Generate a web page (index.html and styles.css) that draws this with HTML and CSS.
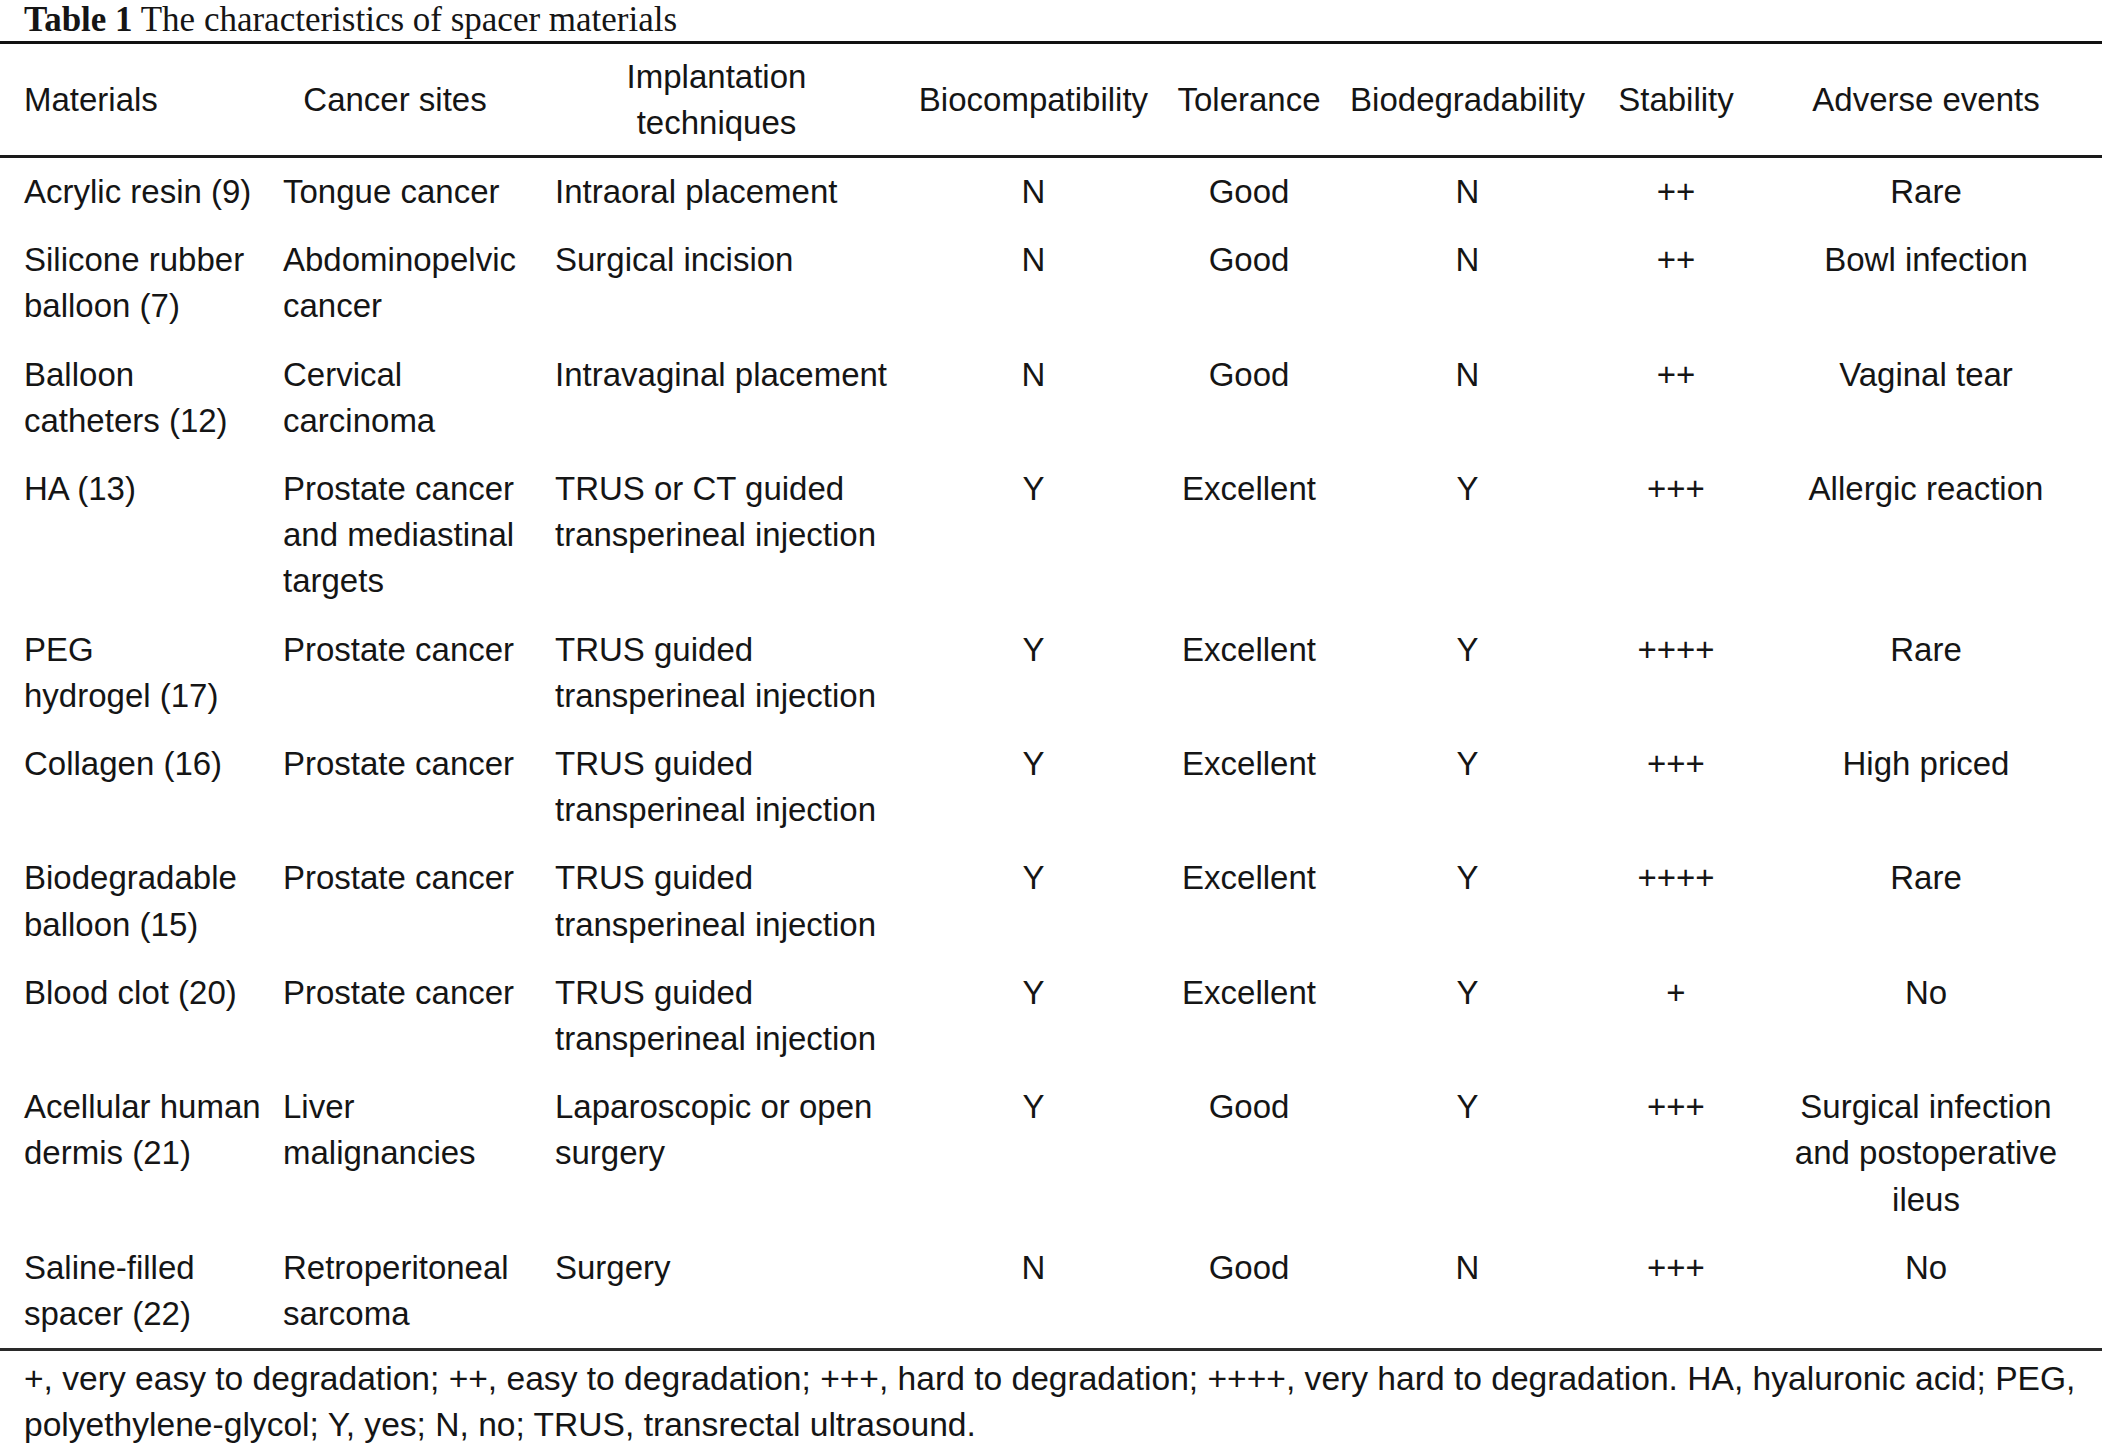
FILE: index.html
```html
<!DOCTYPE html>
<html lang="en">
<head>
<meta charset="utf-8">
<title>Table 1 The characteristics of spacer materials</title>
<link rel="stylesheet" href="styles.css">
</head>
<body>
<div class="page">
  <div class="caption"><span class="caption-label">Table 1</span> The characteristics of spacer materials</div>
  <table class="data">
    <colgroup>
      <col class="c1"><col class="c2"><col class="c3"><col class="c4"><col class="c5"><col class="c6"><col class="c7"><col class="c8">
    </colgroup>
    <thead>
      <tr>
        <th class="h-left">Materials</th>
        <th class="h-sites">Cancer sites</th>
        <th class="h-tech">Implantation<br>techniques</th>
        <th>Biocompatibility</th>
        <th>Tolerance</th>
        <th>Biodegradability</th>
        <th>Stability</th>
        <th>Adverse events</th>
      </tr>
    </thead>
    <tbody>
      <tr>
        <td class="first">Acrylic resin (9)</td><td class="left">Tongue cancer</td><td class="left">Intraoral placement</td>
        <td>N</td><td>Good</td><td>N</td><td>++</td><td>Rare</td>
      </tr>
      <tr>
        <td class="first">Silicone rubber<br>balloon (7)</td><td class="left">Abdominopelvic<br>cancer</td><td class="left">Surgical incision</td>
        <td>N</td><td>Good</td><td>N</td><td>++</td><td>Bowl infection</td>
      </tr>
      <tr>
        <td class="first">Balloon<br>catheters (12)</td><td class="left">Cervical<br>carcinoma</td><td class="left">Intravaginal placement</td>
        <td>N</td><td>Good</td><td>N</td><td>++</td><td>Vaginal tear</td>
      </tr>
      <tr>
        <td class="first">HA (13)</td><td class="left">Prostate cancer<br>and mediastinal<br>targets</td><td class="left">TRUS or CT guided<br>transperineal injection</td>
        <td>Y</td><td>Excellent</td><td>Y</td><td>+++</td><td>Allergic reaction</td>
      </tr>
      <tr>
        <td class="first">PEG<br>hydrogel (17)</td><td class="left">Prostate cancer</td><td class="left">TRUS guided<br>transperineal injection</td>
        <td>Y</td><td>Excellent</td><td>Y</td><td>++++</td><td>Rare</td>
      </tr>
      <tr>
        <td class="first">Collagen (16)</td><td class="left">Prostate cancer</td><td class="left">TRUS guided<br>transperineal injection</td>
        <td>Y</td><td>Excellent</td><td>Y</td><td>+++</td><td>High priced</td>
      </tr>
      <tr>
        <td class="first">Biodegradable<br>balloon (15)</td><td class="left">Prostate cancer</td><td class="left">TRUS guided<br>transperineal injection</td>
        <td>Y</td><td>Excellent</td><td>Y</td><td>++++</td><td>Rare</td>
      </tr>
      <tr>
        <td class="first">Blood clot (20)</td><td class="left">Prostate cancer</td><td class="left">TRUS guided<br>transperineal injection</td>
        <td>Y</td><td>Excellent</td><td>Y</td><td>+</td><td>No</td>
      </tr>
      <tr>
        <td class="first">Acellular human<br>dermis (21)</td><td class="left">Liver<br>malignancies</td><td class="left">Laparoscopic or open<br>surgery</td>
        <td>Y</td><td>Good</td><td>Y</td><td>+++</td><td>Surgical infection<br>and postoperative<br>ileus</td>
      </tr>
      <tr>
        <td class="first">Saline-filled<br>spacer (22)</td><td class="left">Retroperitoneal<br>sarcoma</td><td class="left">Surgery</td>
        <td>N</td><td>Good</td><td>N</td><td>+++</td><td>No</td>
      </tr>
    </tbody>
  </table>
  <div class="notes">+, very easy to degradation; ++, easy to degradation; +++, hard to degradation; ++++, very hard to degradation. HA, hyaluronic acid; PEG,<br>polyethylene-glycol; Y, yes; N, no; TRUS, transrectal ultrasound.</div>
</div>
</body>
</html>
```
FILE: styles.css
```css
html, body {
  margin: 0;
  padding: 0;
  background: #ffffff;
}

.page {
  width: 2102px;
  color: #151515;
  font-family: "Liberation Sans", Arial, Helvetica, sans-serif;
  font-size: 33px;
}

.caption {
  font-family: "Liberation Serif", "Times New Roman", serif;
  font-size: 35px;
  line-height: 39px;
  padding: 0 0 2px 24px;
  white-space: nowrap;
}

.caption-label {
  font-weight: bold;
}

.data {
  width: 2102px;
  table-layout: fixed;
  border-collapse: collapse;
  border-spacing: 0;
}

.c1 { width: 271px; }
.c2 { width: 272px; }
.c3 { width: 359px; }
.c4 { width: 263px; }
.c5 { width: 168px; }
.c6 { width: 269px; }
.c7 { width: 148px; }
.c8 { width: 352px; }

.data th {
  font-weight: normal;
  line-height: 46px;
  padding: 10px 0 9px 0;
  text-align: center;
  vertical-align: middle;
  white-space: nowrap;
  border-top: 3px solid #111111;
  border-bottom: 3px solid #1a1a1a;
}

.data th.h-left {
  text-align: left;
  padding-left: 24px;
}

.data th.h-sites {
  padding-right: 24px;
}

.data th.h-tech {
  padding-right: 12px;
}

.data td {
  line-height: 46.2px;
  padding: 11px 0;
  text-align: center;
  vertical-align: top;
  white-space: nowrap;
}

.data td.first {
  text-align: left;
  padding-left: 24px;
}

.data td.left {
  text-align: left;
  padding-left: 12px;
}

.data tbody tr:last-child td {
  border-bottom: 3px solid #2a2a2a;
}

.notes {
  font-size: 33.6px;
  line-height: 46px;
  padding: 5px 0 0 24px;
  white-space: nowrap;
}
```
